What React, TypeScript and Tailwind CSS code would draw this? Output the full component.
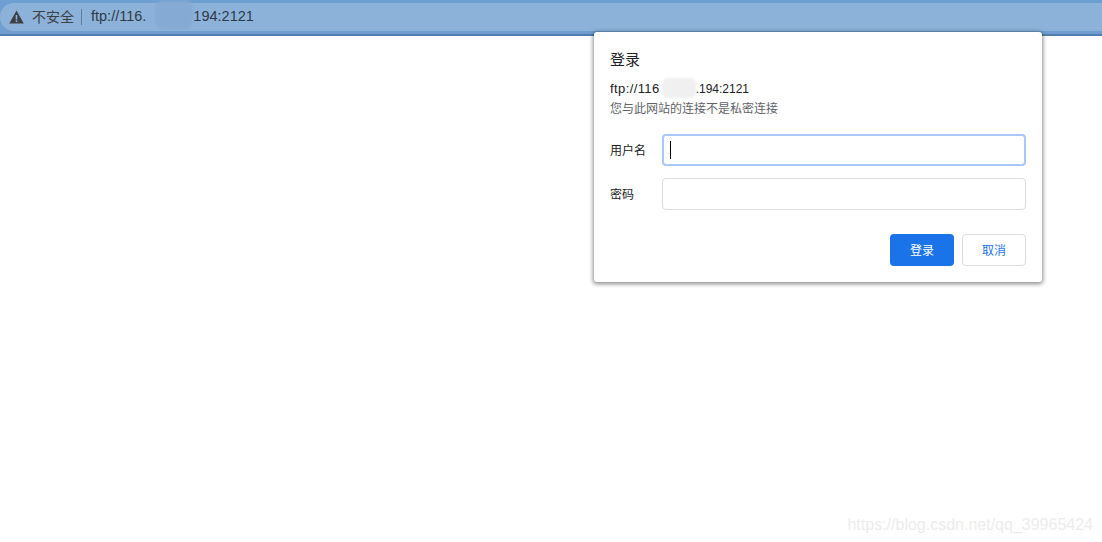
import { useEffect, useRef } from 'react';

const sans = { fontFamily: '"Noto Sans CJK SC", "Liberation Sans", sans-serif' };

function WarningIcon() {
  return (
    <svg width="15" height="14" viewBox="0 0 15 14" className="shrink-0">
      <path d="M7.5 0.5 L14.8 13.5 H0.2 Z" fill="#3c4043" />
      <rect x="6.7" y="5" width="1.6" height="4.6" fill="#8db2da" />
      <rect x="6.7" y="10.4" width="1.6" height="1.6" fill="#8db2da" />
    </svg>
  );
}

export default function App() {
  return (
    <div className="relative min-h-[542px] overflow-hidden bg-white font-['Liberation_Sans',sans-serif]">
      {/* Barre d'adresse */}
      <header className="h-[36px] border-b-2 border-b-[#527fae] bg-[#6f9fd1] pt-[3px]">
        <div className="flex h-[28px] w-full items-center rounded-l-full bg-[#8db2da] pl-[9px]">
          <WarningIcon />
          <span className="ml-[8px] -mt-px text-[14px] text-[#3c4043]" style={sans}>不安全</span>
          <span className="ml-[7px] h-[16px] w-px bg-[#5d7c9e]" />
          <span className="relative ml-[9px] text-[14.5px] text-[#2f3a46]">
            ftp://116.<span className="inline-block w-[47px]" />194:2121
            <span className="absolute left-[64px] -top-[5px] h-[28px] w-[38px] rounded-lg bg-[#85aad3] blur-[1.5px]" />
          </span>
        </div>
      </header>

      {/* Boite de dialogue de connexion */}
      <div className="absolute left-[594px] top-[32px] flex h-[250px] w-[448px] flex-col rounded-[3px] bg-white px-[16px] shadow-[0_1px_4px_1px_rgba(0,0,0,0.45)]" style={sans}>
        <h1 className="mt-[16px] text-[15px] leading-[22px] font-normal text-[#202124]">登录</h1>
        <div className="relative mt-[10px] h-[17px] text-[12px] leading-[17px] text-[#202124] font-['Liberation_Sans',sans-serif]">
          <span className="text-[13px] tracking-[0.4px]">ftp://116</span>
          <span className="inline-block w-[36px]" />.194:2121
          <span className="absolute left-[52px] -top-[2px] h-[20px] w-[34px] rounded-md bg-[#f0f0f0] blur-[1px]" />
        </div>
        <p className="mt-[2px] text-[12px] leading-[17px] text-[#5f6368]">您与此网站的连接不是私密连接</p>

        <div className="mt-[18px] flex items-center">
          <label className="w-[52px] text-[12px] text-[#202124]">用户名</label>
          <div className="relative flex h-[32px] flex-1">
            <input className="h-full w-full rounded-[4px] border-2 border-[#a8c7fa] px-[6px] text-[13px] outline-none" />
            {/* curseur de saisie */}
            <span className="absolute left-[8px] top-[7px] h-[18px] w-px bg-black" />
          </div>
        </div>
        <div className="mt-[12px] flex items-center">
          <label className="w-[52px] text-[12px] text-[#202124]">密码</label>
          <input className="h-[32px] flex-1 rounded-[4px] border border-[#dadce0] px-[7px] text-[13px] outline-none" />
        </div>

        <div className="mt-[24px] flex justify-end gap-[8px]">
          <button className="h-[32px] w-[64px] rounded-[4px] bg-[#1a73e8] text-[12px] text-white">登录</button>
          <button className="h-[32px] w-[64px] rounded-[4px] border border-[#dadce0] bg-white text-[12px] text-[#1a73e8]">取消</button>
        </div>
      </div>

      {/* Filigrane */}
      <div className="absolute right-[9px] bottom-[9px] text-[16px] leading-[17px] text-[#ececec]">
        https://blog.csdn.net/qq_39965424
      </div>
    </div>
  );
}
